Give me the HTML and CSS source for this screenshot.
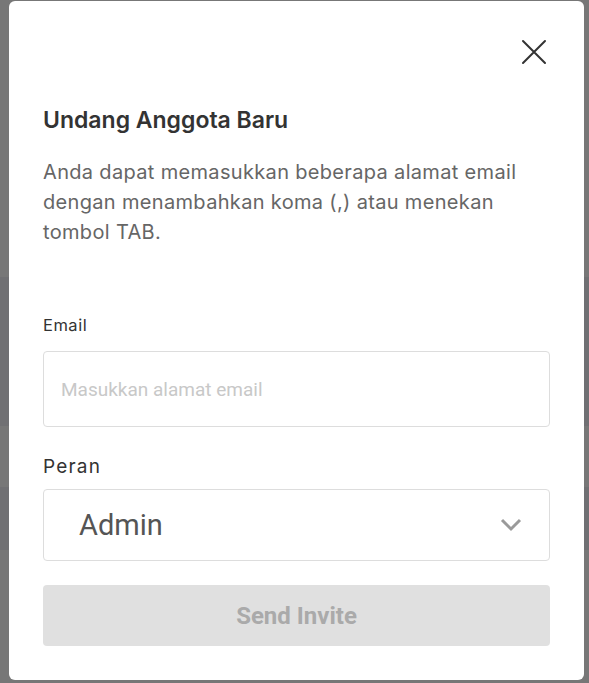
FILE: index.html
```html
<!DOCTYPE html>
<html lang="id">

<head>
  <meta charset="UTF-8" />
  <meta name="viewport" content="width=device-width, initial-scale=1" />
  <title>Undang Anggota Baru</title>
  <link rel="stylesheet" href="styles.css">
</head>

<body>
  <div class="backdrop">
    <div class="modal">
      <div class="modal-top">
        <button class="close-btn" aria-label="Tutup">
          <svg width="26" height="26" viewBox="0 0 26 26">
            <path d="M2 2 L24 24 M24 2 L2 24" stroke="#333" stroke-width="2" stroke-linecap="round" />
          </svg>
        </button>
      </div>

      <h2 class="modal-title">Undang Anggota Baru</h2>
      <p class="modal-desc">Anda dapat memasukkan beberapa alamat email dengan menambahkan koma (,) atau menekan tombol TAB.</p>

      <div class="field">
        <label class="field-label" for="email">Email</label>
        <input id="email" class="text-input" type="text" placeholder="Masukkan alamat email" />
      </div>

      <div class="field">
        <label class="field-label field-label-lg">Peran</label>
        <div class="select-box">
          <span class="select-value">Admin</span>
          <svg class="chevron" width="22" height="14" viewBox="0 0 22 14">
            <path d="M2 2 L11 11 L20 2" fill="none" stroke="#9a9a9a" stroke-width="3" />
          </svg>
        </div>
      </div>

      <button class="btn-send" disabled>Send Invite</button>
    </div>
  </div>
</body>

</html>
```

FILE: styles.css
```css
* {
  margin: 0;
  padding: 0;
  box-sizing: border-box;
}

body {
  background: #777;
  font-family: "Inter", sans-serif;
  color: #333;
  height: 683px;
  overflow: hidden;
}

/* page behind the overlay, dimmed */
.backdrop {
  height: 100%;
  padding: 1px 5px 3px 9px;
  background: linear-gradient(to bottom,
      #777 0, #777 277px,
      #707073 277px, #707073 426px,
      #777 426px, #777 487px,
      #707073 487px, #707073 550px,
      #777 550px);
}

.modal {
  width: 575px;
  height: 679px;
  background: #fff;
  border-radius: 6px;
  padding: 0 34px;
  display: flex;
  flex-direction: column;
}

.modal-top {
  display: flex;
  justify-content: flex-end;
  padding-top: 37px;
  margin-right: 2px;
}

.close-btn {
  width: 28px;
  height: 28px;
  border: none;
  background: none;
  display: flex;
  align-items: center;
  justify-content: center;
  cursor: pointer;
}

.modal-title {
  margin-top: 41px;
  font-size: 23px;
  font-weight: 600;
  line-height: 26px;
  color: #333;
}

.modal-desc {
  margin-top: 24px;
  font-size: 20px;
  line-height: 30px;
  letter-spacing: 0.33px;
  color: #666;
}

.field {
  display: flex;
  flex-direction: column;
}

.field-label {
  margin-top: 68px;
  font-size: 16.5px;
  line-height: 20px;
  letter-spacing: 0.5px;
  color: #333;
  margin-bottom: 16px;
}

.field-label-lg {
  margin-top: 28px;
  font-size: 19px;
  line-height: 24px;
  letter-spacing: 1.2px;
  margin-bottom: 10px;
}

.text-input {
  height: 76px;
  border: 1px solid #ddd;
  border-radius: 4px;
  padding: 0 17px;
  font-family: "Roboto", sans-serif;
  font-size: 19px;
  color: #333;
  outline: none;
}

.text-input::placeholder {
  color: #c8c8c8;
}

.select-box {
  height: 72px;
  border: 1px solid #ddd;
  border-radius: 4px;
  padding: 0 27px 0 35px;
  display: flex;
  align-items: center;
  justify-content: space-between;
}

.select-value {
  font-family: "Roboto", sans-serif;
  font-size: 29px;
  color: #555;
}

.btn-send {
  margin-top: 24px;
  height: 61px;
  border: none;
  border-radius: 4px;
  background: #e0e0e0;
  color: #aaa;
  font-family: "Roboto", sans-serif;
  font-size: 24px;
  font-weight: 700;
}
```
